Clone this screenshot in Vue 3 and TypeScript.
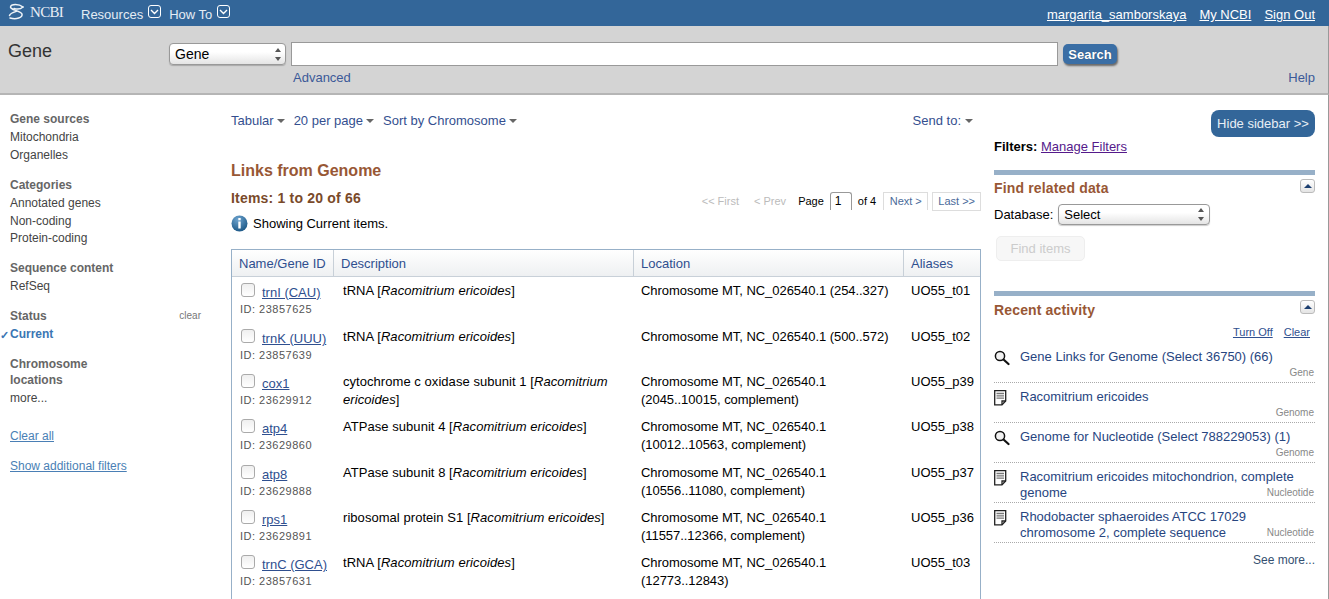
<script setup lang="ts">
interface GeneRow {
  name: string
  id: string
  pre: string
  location: string[]
  alias: string
}

const geneRows: GeneRow[] = [
  { name: 'trnI (CAU)', id: '23857625', pre: 'tRNA', location: ['Chromosome MT, NC_026540.1 (254..327)'], alias: 'UO55_t01' },
  { name: 'trnK (UUU)', id: '23857639', pre: 'tRNA', location: ['Chromosome MT, NC_026540.1 (500..572)'], alias: 'UO55_t02' },
  { name: 'cox1', id: '23629912', pre: 'cytochrome c oxidase subunit 1', location: ['Chromosome MT, NC_026540.1', '(2045..10015, complement)'], alias: 'UO55_p39' },
  { name: 'atp4', id: '23629860', pre: 'ATPase subunit 4', location: ['Chromosome MT, NC_026540.1', '(10012..10563, complement)'], alias: 'UO55_p38' },
  { name: 'atp8', id: '23629888', pre: 'ATPase subunit 8', location: ['Chromosome MT, NC_026540.1', '(10556..11080, complement)'], alias: 'UO55_p37' },
  { name: 'rps1', id: '23629891', pre: 'ribosomal protein S1', location: ['Chromosome MT, NC_026540.1', '(11557..12366, complement)'], alias: 'UO55_p36' },
  { name: 'trnC (GCA)', id: '23857631', pre: 'tRNA', location: ['Chromosome MT, NC_026540.1', '(12773..12843)'], alias: 'UO55_t03' },
]

const filterGroups = [
  { title: 'Gene sources', items: ['Mitochondria', 'Organelles'] },
  { title: 'Categories', items: ['Annotated genes', 'Non-coding', 'Protein-coding'] },
  { title: 'Sequence content', items: ['RefSeq'] },
]

const recent = [
  { icon: 'search', text: 'Gene Links for Genome (Select 36750) (66)', db: 'Gene' },
  { icon: 'doc', text: 'Racomitrium ericoides', db: 'Genome' },
  { icon: 'search', text: 'Genome for Nucleotide (Select 788229053) (1)', db: 'Genome' },
  { icon: 'doc', text: 'Racomitrium ericoides mitochondrion, complete genome', db: 'Nucleotide' },
  { icon: 'doc', text: 'Rhodobacter sphaeroides ATCC 17029 chromosome 2, complete sequence', db: 'Nucleotide' },
]
</script>

<template>
  <div class="page">
    <header class="topbar">
      <div class="logo">
        <svg width="24" height="22" viewBox="8 2 24 22" fill="none" stroke="#eef3f8" stroke-width="1.500" stroke-linecap="round">
          <path d="M23 7C19 3.500 11 3.500 10.500 7c-.4 3 10 3.500 11.500 7 .8 3.500-5.500 6-12 4" />
          <path d="M14 8.500c3 .9 6.500 .8 9-1.500" />
          <path d="M9.500 15.500c.5-2.300 4-3.300 7-4.200" />
        </svg>
        <span class="logo-text">NCBI</span>
      </div>
      <a class="top-menu">Resources</a>
      <svg class="chev" width="14" height="14" viewBox="0 0 14 14" fill="none" stroke="#fff"><rect x=".5" y=".5" width="12" height="12" rx="2.500" /><path d="M3 5l3.500 3.500L10 5" stroke-width="1.400" /></svg>
      <a class="top-menu second">How To</a>
      <svg class="chev" width="14" height="14" viewBox="0 0 14 14" fill="none" stroke="#fff"><rect x=".5" y=".5" width="12" height="12" rx="2.500" /><path d="M3 5l3.500 3.500L10 5" stroke-width="1.400" /></svg>
      <nav class="user-links">
        <a>margarita_samborskaya</a>
        <a>My NCBI</a>
        <a>Sign Out</a>
      </nav>
    </header>

    <section class="searchbar">
      <h1 class="db-title">Gene</h1>
      <div class="search-main">
        <div class="search-row">
          <div class="fake-select db-select">
            <span>Gene</span>
            <span class="spin"><i class="up"></i><i class="down"></i></span>
          </div>
          <div class="term"></div>
          <button class="search-btn">Search</button>
        </div>
        <div class="search-links">
          <a>Advanced</a>
          <a>Help</a>
        </div>
      </div>
    </section>

    <main class="body">
      <aside class="filters">
        <div v-for="g in filterGroups" :key="g.title" class="f-group">
          <h3>{{ g.title }}</h3>
          <a v-for="i in g.items" :key="i" class="f-item">{{ i }}</a>
        </div>
        <div class="f-group status-group">
          <h3 class="status-head">Status <span class="clear">clear</span></h3>
          <a class="f-item current"><span class="check">✓</span>Current</a>
        </div>
        <div class="f-group">
          <h3 class="chrom">Chromosome<br />locations</h3>
          <a class="f-item">more...</a>
        </div>
        <a class="f-link clear-all">Clear all</a>
        <a class="f-link">Show additional filters</a>
      </aside>

      <div class="content">
        <div class="toolbar">
          <a>Tabular<i class="caret"></i></a>
          <a>20 per page<i class="caret"></i></a>
          <a>Sort by Chromosome<i class="caret"></i></a>
          <a class="send">Send to:<i class="caret"></i></a>
        </div>
        <h2 class="links-title">Links from Genome</h2>
        <div class="items-row">
          <div class="items-count">Items: 1 to 20 of 66</div>
          <div class="pager">
            <span class="off first">&lt;&lt; First</span>
            <span class="off prev">&lt; Prev</span>
            <span class="pg">Page</span>
            <span class="pg-box">1</span>
            <span class="pg">of 4</span>
            <a class="pg-btn next">Next &gt;</a>
            <a class="pg-btn last">Last &gt;&gt;</a>
          </div>
        </div>
        <div class="info">
          <svg width="17" height="17" viewBox="0 0 17 17">
            <defs>
              <radialGradient id="infoFill" cx=".4" cy=".25" r=".85">
                <stop offset="0" stop-color="#6ea4cf" />
                <stop offset="1" stop-color="#13507f" />
              </radialGradient>
            </defs>
            <circle cx="8.500" cy="8.500" r="8" fill="url(#infoFill)" />
            <rect x="7.300" y="3" width="2.400" height="2.300" fill="#fff" />
            <rect x="7.300" y="6.500" width="2.400" height="7" fill="#fff" />
          </svg>
          <span>Showing Current items.</span>
        </div>

        <table class="results">
          <colgroup>
            <col class="c1" />
            <col class="c2" />
            <col class="c3" />
            <col class="c4" />
          </colgroup>
          <thead>
            <tr>
              <th>Name/Gene ID</th>
              <th>Description</th>
              <th>Location</th>
              <th>Aliases</th>
            </tr>
          </thead>
          <tbody>
            <tr v-for="r in geneRows" :key="r.id">
              <td class="name-cell">
                <div class="name-line">
                  <span class="box"></span>
                  <a>{{ r.name }}</a>
                </div>
                <div class="gene-id">ID: {{ r.id }}</div>
              </td>
              <td class="desc-cell">{{ r.pre }} [<em>Racomitrium ericoides</em>]</td>
              <td class="loc-cell"><div v-for="l in r.location" :key="l">{{ l }}</div></td>
              <td class="alias-cell">{{ r.alias }}</td>
            </tr>
            <!-- la tabla sigue por debajo del pliegue -->
            <tr class="filler"><td colspan="4"></td></tr>
          </tbody>
        </table>
      </div>

      <aside class="side">
        <div class="hide-wrap"><button class="hide-btn">Hide sidebar &gt;&gt;</button></div>
        <div class="filters-line"><b>Filters:</b> <a>Manage Filters</a></div>

        <section class="portlet find">
          <div class="p-head">
            <h3>Find related data</h3>
            <span class="collapse"><i></i></span>
          </div>
          <div class="db-row">
            <label>Database:</label>
            <div class="fake-select side-select">
              <span>Select</span>
              <span class="spin"><i class="up"></i><i class="down"></i></span>
            </div>
          </div>
          <button class="find-btn" disabled>Find items</button>
        </section>

        <section class="portlet recent">
          <div class="p-head">
            <h3>Recent activity</h3>
            <span class="collapse"><i></i></span>
          </div>
          <div class="turn">
            <a>Turn Off</a>
            <a>Clear</a>
          </div>
          <ul>
            <li v-for="r in recent" :key="r.text">
              <svg v-if="r.icon === 'search'" class="r-icon" width="16" height="16" viewBox="0 0 16 16" fill="none" stroke="#111">
                <circle cx="6" cy="6" r="4.600" stroke-width="1.500" fill="#f2f2f2" />
                <path d="M9.500 9.500l5 4.500" stroke-width="2.200" stroke-linecap="round" />
              </svg>
              <svg v-else class="r-icon" width="16" height="16" viewBox="0 0 16 16" fill="none" stroke="#222">
                <path d="M.7.7h11v10.300L8 14.800H.7z" stroke-width="1.300" />
                <path d="M2.500 3.500h7.500M2.500 5.800h7.500M2.500 8.100h7.500" stroke="#777" stroke-width="1.300" />
                <path d="M8 14.800v-3.800h3.700" stroke-width="1.300" />
              </svg>
              <a class="r-text">{{ r.text }}</a>
              <span class="r-db">{{ r.db }}</span>
            </li>
          </ul>
          <div class="see-more"><a>See more...</a></div>
        </section>
      </aside>
    </main>
  </div>
</template>

<style>
html, body {
  margin: 0;
  overflow: hidden;
  background: #fff;
}
</style>

<style scoped>
.page {
  width: 1329px;
  height: 599px;
  overflow: hidden;
  font-family: "Liberation Sans", Arial, sans-serif;
  font-size: 13px;
  color: #000;
  display: flex;
  flex-direction: column;
}
a { cursor: pointer; }

/* barra superior */
.topbar {
  height: 26px;
  flex: none;
  background: #336699;
  color: #fff;
  display: flex;
  align-items: center;
  padding: 0 14px 0 8px;
  box-sizing: border-box;
}
.logo { display: flex; align-items: center; width: 73px; }
.logo-text {
  font-family: "Liberation Serif", serif;
  font-size: 15px;
  color: #e8eef5;
  margin: -2px 0 0 -2px;
  letter-spacing: -.7px;
}
.top-menu { color: #e4ecf4; font-size: 13px; margin-top: 3px; }
.top-menu.second { margin-left: 3px; }
.chev { margin: -2px 4px 0 5px; }
.user-links { margin-left: auto; display: flex; gap: 13px; margin-top: 3px; }
.user-links a { color: #fff; text-decoration: underline; }

/* buscador */
.searchbar {
  height: 69px;
  flex: none;
  background: #d4d4d4;
  border-bottom: 2px solid #b5b5b5;
  border-right: 1px solid #999;
  box-sizing: border-box;
  display: flex;
  padding: 0 13px 0 8px;
}
.db-title {
  width: 161px;
  margin: 15px 0 0;
  font-size: 18px;
  font-weight: normal;
  color: #333;
}
.search-main { flex: 1; padding-top: 16px; }
.search-row { display: flex; align-items: flex-start; }
.fake-select {
  display: flex;
  align-items: center;
  justify-content: space-between;
  box-sizing: border-box;
  background: linear-gradient(#fff 40%, #e4e4e4);
  border: 1px solid #999;
  border-radius: 4px;
  box-shadow: 0 1px 1px rgba(0,0,0,.2);
}
.db-select { width: 117px; height: 22px; padding: 0 4px 0 5px; font-size: 14px; margin-top: 1px; }
.spin { display: flex; flex-direction: column; gap: 5px; }
.spin i { display: block; width: 0; height: 0; border-left: 3px solid transparent; border-right: 3px solid transparent; }
.spin .up { border-bottom: 4px solid #555; }
.spin .down { border-top: 4px solid #555; }
.term {
  width: 767px;
  height: 24px;
  margin-left: 5px;
  box-sizing: border-box;
  background: #fff;
  border: 1px solid #999;
}
.search-btn {
  width: 54px;
  height: 20px;
  margin: 2px 0 0 5px;
  padding: 0;
  border: none;
  border-radius: 5px;
  background: #3a6ea5;
  color: #fff;
  font: bold 13px "Liberation Sans", Arial, sans-serif;
  box-shadow: 1px 2px 2px rgba(0,0,0,.5);
  text-shadow: 0 0 1px rgba(0,0,0,.4);
}
.search-links {
  display: flex;
  justify-content: space-between;
  margin-top: 4px;
  padding-left: 124px;
}
.search-links a { color: #3b5998; }

/* cuerpo */
.body {
  flex: 1;
  display: flex;
  min-height: 0;
  border-right: 1px solid #999;
}
.filters {
  width: 231px;
  flex: none;
  box-sizing: border-box;
  padding: 15px 29px 0 10px;
  font-size: 12px;
  color: #444;
}
.f-group { margin-bottom: 12px; }
.f-group h3 {
  margin: 0;
  font-size: 12px;
  line-height: 18px;
  color: #666;
  font-weight: bold;
}
.f-item { display: block; line-height: 18px; color: #444; position: relative; }
.f-group:nth-child(2) .f-item:last-child { margin-top: -1px; }
.status-group { margin-bottom: 13px; }
.status-head { display: flex; justify-content: space-between; }
.clear { font-size: 10px; font-weight: normal; color: #777; margin-right: 1px; }
.current { color: #3b76b3; font-weight: bold; }
.check { position: absolute; left: -10px; top: 1px; font-size: 11px; font-weight: bold; color: #3b76b3; }
.chrom { line-height: 16px !important; margin-bottom: 1px !important; }
.f-link { display: block; color: #4a7fb5; text-decoration: underline; margin-bottom: 15px; line-height: 15px; }
.clear-all { margin-top: 22px; }

/* columna central */
.content { width: 750px; flex: none; padding-top: 17px; }
.toolbar { display: flex; gap: 9px; line-height: 17px; }
.toolbar a { color: #344f8f; }
.send { margin-left: auto; margin-right: 8px; }
.send .caret { margin-left: 4px; }
.caret {
  display: inline-block;
  width: 0;
  height: 0;
  margin-left: 3px;
  vertical-align: 2px;
  border-left: 4px solid transparent;
  border-right: 4px solid transparent;
  border-top: 4px solid #666;
}
.links-title {
  margin: 32px 0 0;
  font-size: 16px;
  line-height: 19px;
  color: #985735;
  font-weight: bold;
}
.items-row { display: flex; justify-content: space-between; align-items: flex-end; margin-top: 9px; }
.items-count { font-size: 14px; font-weight: bold; color: #7a4a2a; line-height: 18px; letter-spacing: .2px; }
.pager { display: flex; align-items: center; font-size: 11px; height: 18px; margin-bottom: -3px; }
.off { color: #bbb; }
.first { margin-right: 15px; }
.prev { margin-right: 12px; }
.pg { color: #000; }
.pg-box {
  width: 22px;
  height: 18px;
  margin: 0 6px;
  box-sizing: border-box;
  border: 1px solid #999;
  border-bottom: none;
  border-radius: 3px 3px 0 0;
  padding-left: 4px;
  font-size: 12px;
  line-height: 17px;
}
.pg-btn {
  border: 1px solid #ddd;
  border-bottom: none;
  line-height: 17px;
  color: #4a6a9a;
}
.next { margin-left: 7px; padding: 0 5.500px; }
.last { margin-left: 4px; padding: 0 5px; border-bottom: 1px solid #ddd; }
.info { display: flex; align-items: center; gap: 5px; margin-top: 8px; line-height: 17px; }

.results {
  margin-top: 17px;
  width: 750px;
  table-layout: fixed;
  border-collapse: separate;
  border-spacing: 0;
  border: 1px solid #97b0c8;
  border-bottom: none;
}
.c1 { width: 102px; }
.c2 { width: 300px; }
.c3 { width: 270px; }
.c4 { width: 76px; }
.results th {
  height: 27px;
  padding: 0 7px;
  font-weight: normal;
  text-align: left;
  color: #2f4f8f;
  background: linear-gradient(#fff, #eef0f2);
  border-bottom: 1px solid #c8d0d8;
  border-right: 1px solid #c8d0d8;
  white-space: nowrap;
  box-sizing: border-box;
}
.results th:last-child { border-right: none; }
.results td {
  height: 45px;
  box-sizing: border-box;
  vertical-align: top;
  padding: 5px 8px 0 9px;
  line-height: 18px;
}
.results tbody tr:nth-child(1) td,
.results tbody tr:nth-child(4) td { height: 46px; }
.results td.desc-cell { letter-spacing: .05px; }
.results td em { letter-spacing: .08px; }
.results td.name-cell { padding: 5px 0 0 8px; white-space: nowrap; }
.results td.loc-cell { padding-left: 7px; padding-right: 0; white-space: nowrap; letter-spacing: -.05px; }
.results td.alias-cell { padding-left: 7px; padding-right: 0; white-space: nowrap; }
.results .filler td { height: 40px; }
.name-line { display: flex; align-items: flex-end; height: 18px; }
.box {
  width: 14px;
  height: 14px;
  margin: 0 7px 3px 1px;
  flex: none;
  box-sizing: border-box;
  border: 1px solid #aaa;
  border-radius: 3px;
  background: linear-gradient(#efefef, #fff);
}
.name-line a { color: #2f4f8f; text-decoration: underline; line-height: 15px; }
.gene-id { font-size: 11px; line-height: 15px; color: #555; letter-spacing: .5px; margin-top: 2px; }

/* barra lateral */
.side { width: 321px; margin-left: 13px; flex: none; padding-top: 15px; box-sizing: border-box; }
.hide-wrap { display: flex; justify-content: flex-end; }
.hide-btn {
  width: 104px;
  height: 27px;
  padding: 0;
  border: none;
  border-radius: 8px;
  background: #336699;
  color: #e8eef5;
  font: 13px "Liberation Sans", Arial, sans-serif;
}
.filters-line { margin-top: 1px; line-height: 17px; }
.filters-line a { color: #551a8b; text-decoration: underline; }

.portlet { border-top: 5px solid #97b0c8; }
.find { margin-top: 15px; height: 121px; box-sizing: border-box; }
.p-head { display: flex; justify-content: space-between; height: 24px; }
.p-head h3 { margin: 5px 0 0; font-size: 14px; line-height: 17px; color: #985735; letter-spacing: .15px; }
.recent .p-head h3 { margin-top: 6px; }
.collapse {
  width: 15px;
  height: 14px;
  box-sizing: border-box;
  margin-top: 4px;
  border: 1px solid #bbb;
  border-radius: 3px;
  background: linear-gradient(#fff, #e4e4e4);
  display: flex;
  align-items: center;
  justify-content: center;
}
.collapse i { width: 0; height: 0; border-left: 4px solid transparent; border-right: 4px solid transparent; border-bottom: 4px solid #1c3f70; }
.db-row { display: flex; align-items: center; gap: 5px; margin-top: 5px; }
.side-select { width: 152px; height: 21px; padding: 0 5px; }
.find-btn {
  display: block;
  width: 89px;
  height: 25px;
  margin: 11px 0 0 2px;
  border: 1px solid #eee;
  border-radius: 5px;
  background: #f7f7f7;
  color: #ccc;
  font: 13px "Liberation Sans", Arial, sans-serif;
}
.recent .p-head { height: 23px; }
.turn { display: flex; justify-content: flex-end; gap: 11px; padding-right: 5px; font-size: 11px; line-height: 14px; margin-top: 6px; }
.turn a { color: #2f4f8f; text-decoration: underline; }
.recent ul { list-style: none; margin: 4px 0 0; padding: 0; }
.recent li {
  position: relative;
  height: 40px;
  box-sizing: border-box;
  border-bottom: 1px dotted #aaa;
  padding: 6px 0 0 26px;
  line-height: 16px;
}
.r-icon { position: absolute; left: 0; top: 7px; }
.r-text { color: #27457f; display: block; width: 285px; }
.r-db { position: absolute; right: 1px; bottom: 3px; font-size: 10px; color: #888; line-height: 12px; }
.see-more { text-align: right; font-size: 12px; margin-top: 10px; }
.see-more a { color: #344f70; }
</style>
